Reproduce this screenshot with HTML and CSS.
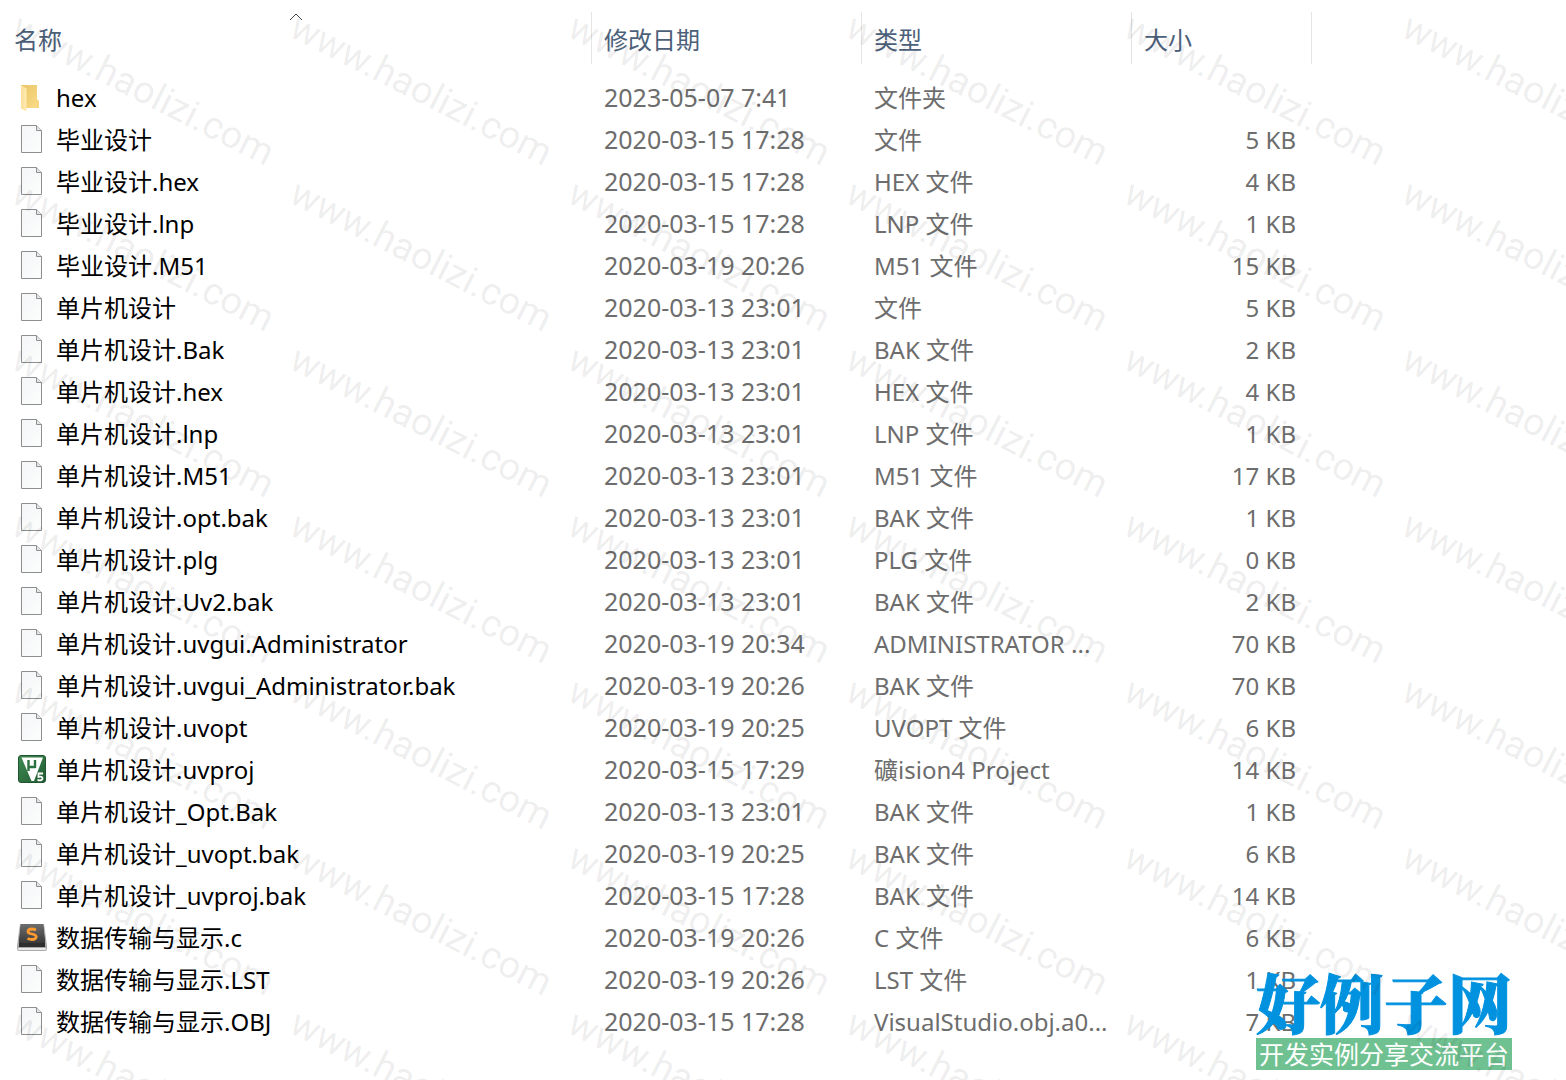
FILE: index.html
```html
<!DOCTYPE html>
<html lang="zh-CN">

<head>
    <meta charset="UTF-8">
    <meta name="viewport" content="width=device-width, initial-scale=1.0">
    <title>文件列表</title>
    <link rel="stylesheet" href="styles.css">
</head>

<body>
    <!-- 图标定义 -->
    <svg class="defs" aria-hidden="true">
        <defs>
            <linearGradient id="paper" x1="0" y1="0" x2="1" y2="1">
                <stop offset="0" stop-color="#f4f6f7" />
                <stop offset="1" stop-color="#fcfdfd" />
            </linearGradient>
            <linearGradient id="gold" x1="0" y1="0" x2="1" y2="1">
                <stop offset="0" stop-color="#e9c568" />
                <stop offset="1" stop-color="#fbdc86" />
            </linearGradient>
            <linearGradient id="flap" x1="0" y1="0" x2="1" y2="0">
                <stop offset="0" stop-color="#fbdf96" />
                <stop offset="1" stop-color="#ffebb5" />
            </linearGradient>
            <linearGradient id="green" x1="0" y1="0" x2="1" y2="1">
                <stop offset="0" stop-color="#3f8a52" />
                <stop offset="1" stop-color="#215c33" />
            </linearGradient>
            <linearGradient id="dark" x1="0" y1="0" x2="0" y2="1">
                <stop offset="0" stop-color="#6e6e6e" />
                <stop offset="1" stop-color="#3a3a3a" />
            </linearGradient>
            <symbol id="file" viewBox="0 0 32 32">
                <path d="M5.5 2.5H20.5L25.5 7.5V29.5H5.5Z" fill="url(#paper)" stroke="#8c8e90" />
                <path d="M20.5 2.5V7.5H25.5" fill="#e4e6e8" stroke="#8c8e90" />
            </symbol>
            <symbol id="folder" viewBox="0 0 32 32">
                <path d="M5 4H21V18L23 20V27H9Z" fill="url(#gold)" />
                <path d="M5 4L10.5 7.5V30.5L5 27.5Z" fill="url(#flap)" />
            </symbol>
            <symbol id="keil" viewBox="0 0 32 32">
                <rect x="2.5" y="2.5" width="27" height="27" rx="2.5" fill="url(#green)" stroke="#1f5630" />
                <path d="M5.5 4.5H27L18 28H15.5Z" fill="#fff" />
                <path d="M12.5 7V18M12.5 14H19.5M19 7V15" stroke="#2c7040" stroke-width="2.4" fill="none" />
                <path d="M27 20.5H22.5V24Q26.5 23 26.5 25.5T21.5 27" stroke="#fff" stroke-width="1.8" fill="none" />
            </symbol>
            <symbol id="sublime" viewBox="0 0 32 32">
                <path d="M4 3H28L31 25V28Q31 30 29 30H3Q1 30 1 28V25Z" fill="#a9a9a9" />
                <path d="M2 27H30V28Q30 29 29 29H3Q2 29 2 28Z" fill="#e9e9e9" />
                <path d="M5 3H27L29 21V26H3V21Z" fill="#2e2e2e" />
                <path d="M5 3H27L29 22H3Z" fill="url(#dark)" />
                <path d="M20 9Q15.5 7 12.5 9Q11 11.5 14 12.5L18 13.5Q21.5 15 19.5 17.5Q16.5 19.5 11.5 17.5" stroke="#ff9a2e" stroke-width="2.8" fill="none" />
            </symbol>
        </defs>
    </svg>

    <main class="explorer">
        <table class="file-table">
            <colgroup>
                <col class="col-name">
                <col class="col-date">
                <col class="col-type">
                <col class="col-size">
                <col>
            </colgroup>
            <thead>
                <tr>
                    <th><svg class="sort" viewBox="0 0 14 8"><path d="M1 7L7 1L13 7" /></svg>名称</th>
                    <th>修改日期</th>
                    <th>类型</th>
                    <th>大小</th>
                    <td></td>
                </tr>
            </thead>
            <tbody>
                <tr><td><div class="name"><svg><use href="#folder" /></svg>hex</div></td><td>2023-05-07 7:41</td><td>文件夹</td><td></td></tr>
                <tr><td><div class="name"><svg><use href="#file" /></svg>毕业设计</div></td><td>2020-03-15 17:28</td><td>文件</td><td>5 KB</td></tr>
                <tr><td><div class="name"><svg><use href="#file" /></svg>毕业设计.hex</div></td><td>2020-03-15 17:28</td><td>HEX 文件</td><td>4 KB</td></tr>
                <tr><td><div class="name"><svg><use href="#file" /></svg>毕业设计.lnp</div></td><td>2020-03-15 17:28</td><td>LNP 文件</td><td>1 KB</td></tr>
                <tr><td><div class="name"><svg><use href="#file" /></svg>毕业设计.M51</div></td><td>2020-03-19 20:26</td><td>M51 文件</td><td>15 KB</td></tr>
                <tr><td><div class="name"><svg><use href="#file" /></svg>单片机设计</div></td><td>2020-03-13 23:01</td><td>文件</td><td>5 KB</td></tr>
                <tr><td><div class="name"><svg><use href="#file" /></svg>单片机设计.Bak</div></td><td>2020-03-13 23:01</td><td>BAK 文件</td><td>2 KB</td></tr>
                <tr><td><div class="name"><svg><use href="#file" /></svg>单片机设计.hex</div></td><td>2020-03-13 23:01</td><td>HEX 文件</td><td>4 KB</td></tr>
                <tr><td><div class="name"><svg><use href="#file" /></svg>单片机设计.lnp</div></td><td>2020-03-13 23:01</td><td>LNP 文件</td><td>1 KB</td></tr>
                <tr><td><div class="name"><svg><use href="#file" /></svg>单片机设计.M51</div></td><td>2020-03-13 23:01</td><td>M51 文件</td><td>17 KB</td></tr>
                <tr><td><div class="name"><svg><use href="#file" /></svg>单片机设计.opt.bak</div></td><td>2020-03-13 23:01</td><td>BAK 文件</td><td>1 KB</td></tr>
                <tr><td><div class="name"><svg><use href="#file" /></svg>单片机设计.plg</div></td><td>2020-03-13 23:01</td><td>PLG 文件</td><td>0 KB</td></tr>
                <tr><td><div class="name"><svg><use href="#file" /></svg>单片机设计.Uv2.bak</div></td><td>2020-03-13 23:01</td><td>BAK 文件</td><td>2 KB</td></tr>
                <tr><td><div class="name"><svg><use href="#file" /></svg>单片机设计.uvgui.Administrator</div></td><td>2020-03-19 20:34</td><td>ADMINISTRATOR ...</td><td>70 KB</td></tr>
                <tr><td><div class="name"><svg><use href="#file" /></svg>单片机设计.uvgui_Administrator.bak</div></td><td>2020-03-19 20:26</td><td>BAK 文件</td><td>70 KB</td></tr>
                <tr><td><div class="name"><svg><use href="#file" /></svg>单片机设计.uvopt</div></td><td>2020-03-19 20:25</td><td>UVOPT 文件</td><td>6 KB</td></tr>
                <tr><td><div class="name"><svg><use href="#keil" /></svg>单片机设计.uvproj</div></td><td>2020-03-15 17:29</td><td>礦ision4 Project</td><td>14 KB</td></tr>
                <tr><td><div class="name"><svg><use href="#file" /></svg>单片机设计_Opt.Bak</div></td><td>2020-03-13 23:01</td><td>BAK 文件</td><td>1 KB</td></tr>
                <tr><td><div class="name"><svg><use href="#file" /></svg>单片机设计_uvopt.bak</div></td><td>2020-03-19 20:25</td><td>BAK 文件</td><td>6 KB</td></tr>
                <tr><td><div class="name"><svg><use href="#file" /></svg>单片机设计_uvproj.bak</div></td><td>2020-03-15 17:28</td><td>BAK 文件</td><td>14 KB</td></tr>
                <tr><td><div class="name"><svg><use href="#sublime" /></svg>数据传输与显示.c</div></td><td>2020-03-19 20:26</td><td>C 文件</td><td>6 KB</td></tr>
                <tr><td><div class="name"><svg><use href="#file" /></svg>数据传输与显示.LST</div></td><td>2020-03-19 20:26</td><td>LST 文件</td><td>1 KB</td></tr>
                <tr><td><div class="name"><svg><use href="#file" /></svg>数据传输与显示.OBJ</div></td><td>2020-03-15 17:28</td><td>VisualStudio.obj.a0...</td><td>7 KB</td></tr>
            </tbody>
        </table>
    </main>

    <div class="brand">
        <div class="brand-title">好例子网</div>
        <div class="brand-sub">开发实例分享交流平台</div>
    </div>

    <div class="watermark"></div>

    <script>
        // 平铺水印
        const watermark = document.querySelector('.watermark');
        const cols = Math.ceil(window.innerWidth / 278);
        const rows = Math.ceil(window.innerHeight / 166);

        watermark.style.setProperty('--cols', cols);
        for (let i = 0; i < cols * rows; i++) {
            const mark = document.createElement('span');
            mark.textContent = 'www.haolizi.com';
            watermark.appendChild(mark);
        }
    </script>
</body>

</html>
```
FILE: styles.css
```css
* {
    margin: 0;
    padding: 0;
    box-sizing: border-box;
}

html,
body {
    height: 100%;
}

body {
    position: relative;
    overflow: hidden;
    background: #fff;
    color: #000;
    font-family: 'Noto Sans', 'Noto Sans CJK SC', sans-serif;
    font-size: 24px;
    line-height: 42px;
}

.defs {
    position: absolute;
    width: 0;
    height: 0;
}

.explorer {
    padding-top: 12px;
}

.file-table {
    width: 100%;
    table-layout: fixed;
    border-collapse: separate;
    border-spacing: 0;
    white-space: nowrap;
}

.col-name {
    width: 592px;
}

.col-date,
.col-type {
    width: 270px;
}

.col-size {
    width: 180px;
}

.file-table th {
    position: relative;
    height: 52px;
    padding: 4px 0 0 12px;
    border-right: 1px solid #e5e5e5;
    color: #4c607a;
    font-weight: 400;
    text-align: left;
}

.file-table th:first-child {
    padding-left: 14px;
}

.sort {
    position: absolute;
    top: 1px;
    left: 50%;
    width: 14px;
    height: 8px;
    margin-left: -7px;
    fill: none;
    stroke: #444;
}

.file-table tbody::before {
    content: '';
    display: block;
    height: 13px;
}

.file-table tbody td {
    height: 42px;
    padding-left: 12px;
    color: #6d6d6d;
    vertical-align: top;
}

.file-table tbody td:first-child {
    padding-left: 16px;
    color: #000;
}

.file-table tbody td:nth-child(2) {
    font-size: 25px;
    line-height: 40px;
}

.file-table tbody td:nth-child(4) {
    padding-right: 16px;
    text-align: right;
}

.name {
    display: flex;
    align-items: center;
    gap: 8px;
}

.name svg {
    width: 32px;
    height: 32px;
    margin-bottom: 2px;
}

.brand {
    position: absolute;
    right: 54px;
    bottom: 10px;
    width: 256px;
    text-align: center;
}

.brand-title {
    padding-bottom: 6px;
    color: #0092df;
    font-family: 'Noto Serif CJK SC', 'Noto Sans CJK SC', serif;
    font-size: 64px;
    font-weight: 900;
    line-height: 64px;
    -webkit-text-stroke: 1px #0092df;
}

.brand-sub {
    background: #70c191;
    color: #fff;
    font-size: 25px;
    line-height: 32px;
    white-space: nowrap;
}

.watermark {
    position: absolute;
    inset: 0;
    display: grid;
    grid-template-columns: repeat(var(--cols, 6), 278px);
    grid-auto-rows: 166px;
    padding-top: 2px;
    overflow: hidden;
    pointer-events: none;
    color: rgba(0, 0, 0, 0.08);
    font-family: Roboto, 'Liberation Sans', sans-serif;
    font-size: 38px;
}

.watermark span {
    padding-left: 11px;
    transform: rotate(27deg);
    transform-origin: 11px 30px;
}
```
